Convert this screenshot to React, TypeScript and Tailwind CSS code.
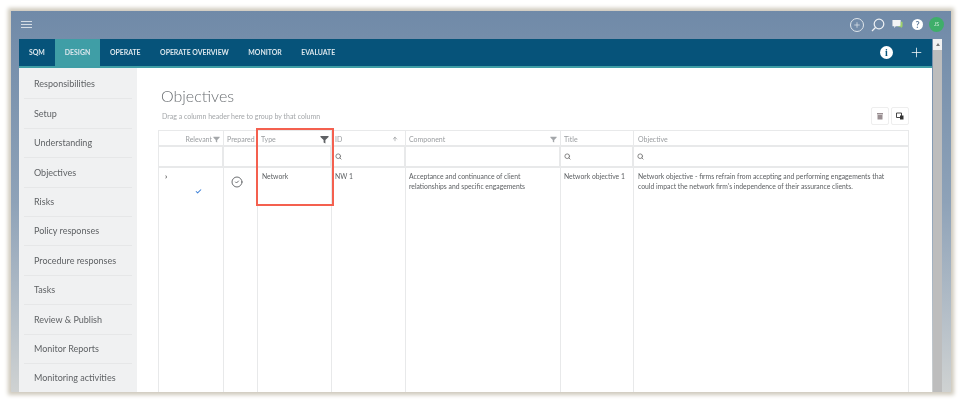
import React from "react"
import { Check, CircleCheck, Plus, Search, ArrowUp } from "lucide-react"

const tabs = ["SQM", "DESIGN", "OPERATE", "OPERATE OVERVIEW", "MONITOR", "EVALUATE"]

const sideItems = [
    "Responsibilities",
    "Setup",
    "Understanding",
    "Objectives",
    "Risks",
    "Policy responses",
    "Procedure responses",
    "Tasks",
    "Review & Publish",
    "Monitor Reports",
    "Monitoring activities",
]

const Funnel = ({ className }: { className: string }): React.ReactElement => (
    <svg viewBox="0 0 10 10" className={className} fill="currentColor">
        <path d="M0.5 1h9v1.2L6 5.6V9.4L4 8.2V5.6L0.5 2.2z" />
    </svg>
)

const HeaderCell = ({ label, children, last }: { label: string; children?: React.ReactNode; last?: boolean }): React.ReactElement => (
    <div className={`flex items-center justify-between pr-[3px] pt-[2px] text-[7px] text-[#9a9da0] border-b-2 border-[#e8e9ea] ${last ? "pl-[4px]" : "pl-[3px] border-r border-r-[#e8e9ea]"}`}>
        <span>{label}</span>
        {children}
    </div>
)

const FilterCell = ({ search, last }: { search?: boolean; last?: boolean }): React.ReactElement => (
    <div className={`flex items-center pl-[3px] border-b-2 border-[#e8e9ea] ${last ? "" : "border-r-2 border-r-[#e8e9ea]"}`}>
        {search && <Search size={7} strokeWidth={3} className="text-[#777]" />}
    </div>
)

const BodyCell = ({ children, last }: { children?: React.ReactNode; last?: boolean }): React.ReactElement => (
    <div className={`pr-1 pt-[4px] text-[6.8px] leading-[9.5px] text-[#5c5f62] ${last ? "pl-[4px]" : "pl-[3px] border-r border-[#e8e9ea]"}`}>{children}</div>
)

const App = (): React.ReactElement => {
    return (
        <div className="w-[962px] h-[403px] bg-white overflow-hidden pl-[11px] pt-[11px] font-['Lato',sans-serif] blur-[0.3px]">
            <div className="w-[940px] h-[381px] flex flex-col overflow-hidden px-2 bg-gradient-to-b from-[#708aa8] via-[#8ea2b8] to-[#cfd2d2] shadow-[0_0_4px_3px_#cfcabd]">
                {/* top bar */}
                <div className="h-[28px] shrink-0 -mx-2 pl-[10px] pr-[7px] pb-[1px] flex items-center justify-between">
                    <div className="flex flex-col gap-[1.5px] w-[11px]">
                        <div className="h-[1.5px] bg-[#d5dde5]" />
                        <div className="h-[1.5px] bg-[#d5dde5]" />
                        <div className="h-[1.5px] bg-[#d5dde5]" />
                    </div>
                    <div className="flex items-center">
                        <div className="w-[14px] h-[14px] rounded-full border border-[#dfe5ea] flex items-center justify-center mr-[7px]">
                            <Plus size={8} strokeWidth={2.2} className="text-[#dfe5ea]" />
                        </div>
                        <svg viewBox="0 0 14 14" className="w-[14px] h-[14px] mr-[7px]" fill="none" stroke="#eef1f4" strokeWidth="1.2">
                            <circle cx="8" cy="6" r="4.8" />
                            <path d="M4.5 9.5L1 13" />
                        </svg>
                        <svg viewBox="0 0 12 12" className="w-[11px] h-[11px] mr-[9px]">
                            <path d="M0.5 1h9v7H4L2.5 10V8h-2z" fill="#f2f4f5" />
                            <path d="M9.5 3h2v5.5h-1V10L9 8.5H6L9.5 7z" fill="#9fd36a" />
                        </svg>
                        <div className="w-[11px] h-[11px] rounded-full bg-white flex items-center justify-center text-[9px] font-bold text-[#64809e] mr-[6px]">?</div>
                        <div className="w-[15px] h-[15px] rounded-full bg-[#3fae6a] flex items-center justify-center text-[5px] text-[#d7efe0]">JS</div>
                    </div>
                </div>

                <div className="flex-1 flex min-h-0">
                    <div className="w-[913px] flex flex-col min-h-0">
                        {/* tabs */}
                        <div className="h-[29px] shrink-0 bg-[#06537a] border-b-2 border-[#3f9ea6] flex items-stretch pr-[8px]">
                            {tabs.map((t) => (
                                <div
                                    key={t}
                                    className={`flex items-center text-[6.9px] font-bold text-[#dbe6ec] ${t === "DESIGN" ? "bg-[#3f9ea6] px-[10px] ml-px" : t === "SQM" ? "pl-[10px] pr-[9px]" : "px-[9.75px]"}`}>
                                    {t}
                                </div>
                            ))}
                            <div className="ml-auto flex items-center gap-4">
                                <div className="w-[13px] h-[13px] rounded-full bg-white flex items-center justify-center text-[10px] font-bold font-['Liberation_Serif',serif] text-[#06537a]">i</div>
                                <Plus size={15} strokeWidth={1.2} className="text-white" />
                            </div>
                        </div>

                        <div className="flex-1 flex min-h-0 bg-white">
                            {/* sidebar */}
                            <div className="w-[118px] shrink-0 bg-[#f0f1f2] px-[5px] pt-[2px] overflow-hidden">
                                {sideItems.map((s) => (
                                    <div key={s} className="h-[29.4px] shrink-0 flex items-center pl-[10px] text-[9px] text-[#5f6265] border-b border-[#e6e7e8]">
                                        {s}
                                    </div>
                                ))}
                            </div>

                            {/* main */}
                            <div className="flex-1 min-w-0 pl-[21px] pr-[23px] flex flex-col">
                                <div className="h-[62px] shrink-0 relative flex flex-col">
                                    <h1 className="mt-[15px] pl-[3px] text-[16px] leading-[26px] font-light text-[#6b6f73]">Objectives</h1>
                                    <p className="pl-[4px] mt-[2px] text-[7px] text-[#a3a6a9]">Drag a column header here to group by that column</p>
                                    <div className="absolute right-0 top-[39px] flex gap-[2px]">
                                        <div className="w-[18px] h-[18px] rounded-[2px] border border-[#eeeeee] flex items-center justify-center">
                                            <svg viewBox="0 0 8 8" className="w-[8px] h-[8px]">
                                                <path d="M1 1h6v1.5H1zM1.5 3h5v4.5h-5z" fill="#9a8f92" />
                                            </svg>
                                        </div>
                                        <div className="w-[18px] h-[18px] rounded-[2px] border border-[#eeeeee] flex items-center justify-center">
                                            <svg viewBox="0 0 8 8" className="w-[8px] h-[8px]">
                                                <path d="M0.5 1h5v4.5h-5z" fill="none" stroke="#333" strokeWidth="0.9" />
                                                <path d="M4 3.5h3.5V7.5H4z" fill="#333" />
                                            </svg>
                                        </div>
                                    </div>
                                </div>

                                {/* grid */}
                                <div className="relative flex-1 min-h-0 grid grid-cols-[65px_34px_74px_74px_155px_73px_1fr] grid-rows-[16px_21px_1fr] border-l border-r border-t border-[#e8e9ea]">
                                    <HeaderCell label="">
                                        <div className="ml-auto flex items-center gap-px">
                                            <span>Relevant</span>
                                            <Funnel className="w-[7px] h-[7px] text-[#a4a7aa]" />
                                        </div>
                                    </HeaderCell>
                                    <HeaderCell label="Prepared" />
                                    <HeaderCell label="Type">
                                        <Funnel className="w-[9px] h-[9px] text-[#5f6265] -mr-px" />
                                    </HeaderCell>
                                    <HeaderCell label="ID">
                                        <ArrowUp size={6} strokeWidth={2} className="text-[#6f7275] mr-[4px]" />
                                    </HeaderCell>
                                    <HeaderCell label="Component">
                                        <Funnel className="w-[7px] h-[7px] text-[#a4a7aa]" />
                                    </HeaderCell>
                                    <HeaderCell label="Title" />
                                    <HeaderCell label="Objective" last />

                                    <FilterCell />
                                    <FilterCell />
                                    <FilterCell />
                                    <FilterCell search />
                                    <FilterCell />
                                    <FilterCell search />
                                    <FilterCell search last />

                                    <div className="relative border-r border-[#e8e9ea]">
                                        <span className="absolute left-[6px] top-[4px] text-[8px] leading-[8px] font-bold text-[#555]">›</span>
                                        <Check size={7} strokeWidth={3.5} className="absolute left-[36px] top-[20px] text-[#3f82d8]" />
                                    </div>
                                    <div className="flex justify-start pl-[7px] pt-[8px] border-r border-[#e8e9ea]">
                                        <CircleCheck size={12} strokeWidth={1.8} className="text-[#5c5f62]" />
                                    </div>
                                    <BodyCell>
                                        <span className="pl-px">Network</span>
                                    </BodyCell>
                                    <BodyCell>NW 1</BodyCell>
                                    <BodyCell>
                                        Acceptance and continuance of client
                                        <br />
                                        relationships and specific engagements
                                    </BodyCell>
                                    <BodyCell>Network objective 1</BodyCell>
                                    <BodyCell last>
                                        Network objective - firms refrain from accepting and performing engagements that
                                        <br />
                                        could impact the network firm's independence of their assurance clients.
                                    </BodyCell>

                                    {/* highlight over the Type column */}
                                    <div className="absolute left-[97px] -top-[3px] w-[78px] h-[78px] border-[2.5px] border-[#f4604f] pointer-events-none" />
                                </div>
                            </div>
                        </div>
                    </div>

                    {/* scrollbar */}
                    <div className="w-[9px] shrink-0 ml-px flex flex-col bg-[#bdbdbd]">
                        <div className="h-[11px] bg-[#f1f1f1] flex items-center justify-center">
                            <div className="w-0 h-0 border-l-[2px] border-r-[2px] border-b-[3px] border-l-transparent border-r-transparent border-b-[#777]" />
                        </div>
                    </div>
                </div>
            </div>
        </div>
    )
}

export default App
